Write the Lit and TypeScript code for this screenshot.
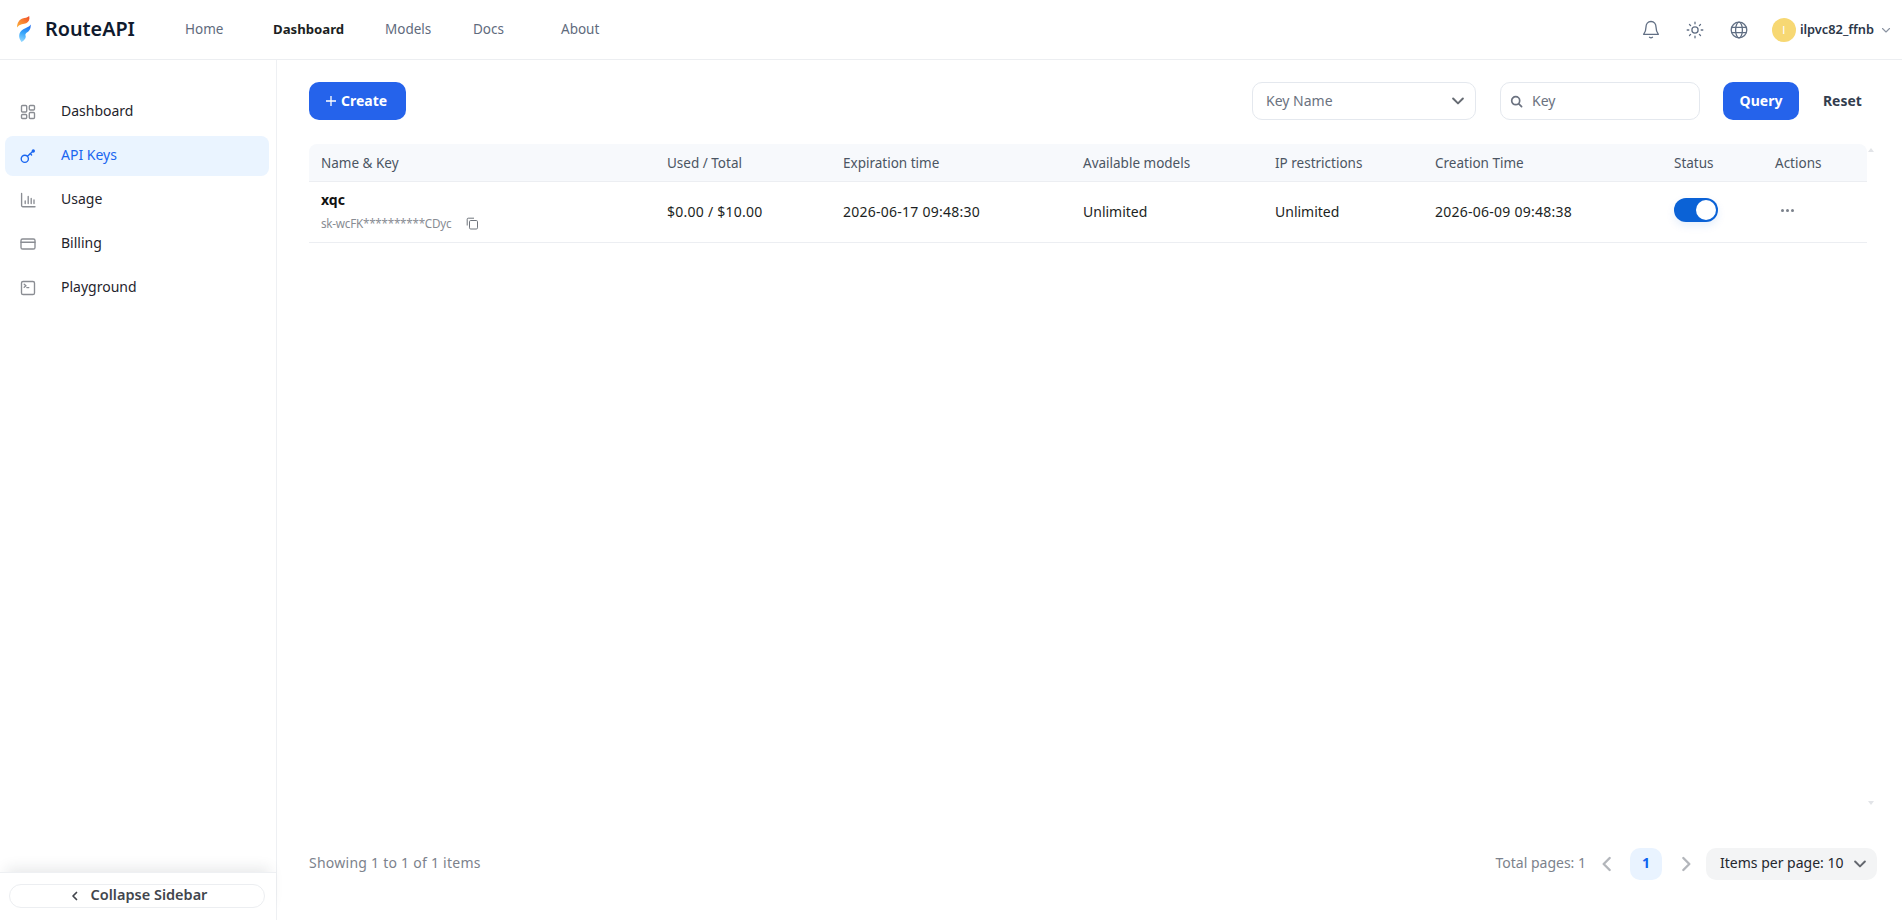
import { LitElement, html, css, svg } from "lit";
import { customElement } from "lit/decorators.js";

const cols = [346, 176, 240, 192, 160, 239, 101, 104];
const gridCols = cols.map((c) => c + "px").join(" ");

const icons: Record<string, unknown> = {
  dashboard: svg`<rect x="1.5" y="1.5" width="5.2" height="6.5" rx="1"/><rect x="9.3" y="1.5" width="5.2" height="4.5" rx="1"/><rect x="1.5" y="10.5" width="5.2" height="4" rx="1"/><rect x="9.3" y="8.5" width="5.2" height="6" rx="1"/>`,
  key: svg`<circle cx="4.8" cy="10.8" r="3.6"/><path d="M7.5 8.2 12.6 3.6"/><path d="M10.4 5.6l1.2 1.4"/><circle cx="13.3" cy="3" r="1" fill="currentColor"/>`,
  usage: svg`<path d="M1.6 1.5v12a1.2 1.2 0 0 0 1.2 1.2H15"/><path d="M5.2 11.5V9M8.2 11.5V4.5M11.2 11.5V6.5M14 11.5V8"/>`,
  billing: svg`<rect x="1" y="3" width="14" height="10" rx="1.6"/><path d="M1 6.2h14"/>`,
  play: svg`<rect x="1.5" y="1.5" width="13" height="13" rx="1.6"/><path d="M4.2 4.2 6 5.7 4.2 7.2M6.8 7.6h2"/>`,
};

@customElement("app-root")
export class AppRoot extends LitElement {
  static styles = css`
    :host {
      display: flex;
      flex-direction: column;
      width: 1902px;
      height: 920px;
      overflow: hidden;
      background: #fff;
      font-family: "Noto Sans", "Open Sans", sans-serif;
      font-size: 14px;
      color: #1c1f23;
    }
    svg { display: block; flex: none; }
    .top {
      height: 59px;
      flex: none;
      display: flex;
      align-items: center;
      border-bottom: 1px solid #eceef1;
      position: relative;
    }
    .logo { margin-left: 17px; width: 14px; height: 26px; margin-top: -2px; }
    .brand {
      margin-left: 14px;
      width: 95px;
      font-size: 19.8px;
      font-weight: 600;
      color: #0f1a2e;
      padding-bottom: 3px;
      white-space: nowrap;
    }
    .nav { display: flex; margin-left: 45px; padding-bottom: 1px; }
    .nav span { width: 88px; color: #5f6b7d; font-size: 13.5px; }
    .nav span.on { color: #1c1f23; font-weight: 700; font-size: 13.2px; }
    .nav span.w112 { width: 112px; }
    .right {
      margin-left: auto;
      display: flex;
      align-items: center;
      margin-right: 10px;
      color: #616f84;
    }
    .right .ic { width: 44px; display: flex; justify-content: center; }
    .avatar {
      width: 24px; height: 24px; border-radius: 50%;
      background: #f7d873; color: #fff;
      display: flex; align-items: center; justify-content: center;
      font-family: "Liberation Sans", sans-serif;
      font-size: 11px;
      margin-left: 11px;
    }
    .uname { margin-left: 4px; font-size: 12.8px; font-weight: 600; color: #2b3648; padding-bottom: 2px; }
    .uchev { margin-left: 6px; color: #8a93a1; }

    .body { flex: 1; display: flex; min-height: 0; }
    .side {
      width: 276px;
      flex: none;
      border-right: 1px solid #eef0f3;
      display: flex;
      flex-direction: column;
    }
    .menu { flex: 1; padding: 32px 7px 0 5px; display: flex; flex-direction: column; gap: 4px; }
    .item {
      height: 40px;
      display: flex;
      align-items: center;
      border-radius: 8px;
      padding-left: 15px;
      color: #1f242c;
    }
    .item svg { color: #8a8d93; }
    .item span { margin-left: 25px; font-size: 14px; padding-bottom: 3px; }
    .item.on { background: #eaf4ff; color: #1a66f0; }
    .item.on svg { color: #1a66f0; }
    .collapse {
      flex: none;
      height: 48px;
      box-sizing: border-box;
      border-top: 1px solid #eef0f3;
      padding: 11px 11px 0 9px;
      box-shadow: 0 -10px 14px -6px rgba(30, 35, 45, 0.1);
      position: relative;
      background: #fff;
    }
    .pill {
      height: 24px;
      border: 1px solid #eceef1;
      border-radius: 12px;
      display: flex;
      align-items: center;
      justify-content: center;
      gap: 10px;
      box-sizing: border-box;
      font-weight: 600;
      font-size: 14.5px;
      color: #42464d;
      padding-left: 2px;
    }
    .pill span { padding-bottom: 4px; }

    .main { flex: 1; min-width: 0; padding: 22px 0 0 32px; display: flex; flex-direction: column; position: relative; }
    .tools { display: flex; align-items: center; height: 38px; flex: none; }
    .btn {
      height: 38px;
      box-sizing: border-box;
      border-radius: 10px;
      background: #2563eb;
      color: #fff;
      font-weight: 700;
      display: flex;
      align-items: center;
      justify-content: center;
      padding-bottom: 2px;
    }
    .create { width: 97px; gap: 5px; padding-right: 2px; }
    .create svg { margin-top: 2px; }
    .sel, .inp {
      height: 38px;
      box-sizing: border-box;
      border: 1px solid #e4e8ee;
      border-radius: 10px;
      display: flex;
      align-items: center;
      color: #6b7280;
    }
    .sel span, .inp span { padding-bottom: 2px; }
    .sel { margin-left: auto; width: 224px; padding: 0 10px 0 13px; justify-content: space-between; }
    .sel svg { color: #666b73; }
    .inp { margin-left: 24px; width: 200px; padding-left: 9px; gap: 9px; }
    .query { margin-left: 23px; width: 76px; }
    .reset { margin-left: 24px; width: 40px; margin-right: 39px; font-weight: 700; font-size: 13.9px; color: #323d4e; padding-bottom: 2px; white-space: nowrap; }

    .table { margin-top: 24px; width: 1558px; flex: 1; min-height: 0; }
    .head, .row { display: grid; }
    .head {
      height: 37px;
      background: #f7f9fc;
      border-bottom: 1px solid #eceef2;
      border-radius: 8px 8px 0 0;
      align-items: center;
      color: #4b5563;
      font-size: 13.5px;
    }
    .head div, .row > div { padding-left: 12px; }
    .row { height: 60px; border-bottom: 1px solid #eceef2; align-items: center; }
    .cell { padding-bottom: 2px; }
    .num { letter-spacing: 0.25px; }
    .name { font-weight: 700; font-size: 14px; color: #111; line-height: 20px; margin-top: -1px; }
    .keyline { display: flex; align-items: center; font-size: 11.7px; letter-spacing: -0.25px; color: #888c93; line-height: 20px; margin-top: 3px; gap: 15px; }
    .toggle {
      width: 44px; height: 24px; border-radius: 12px; background: #0b62d6;
      box-shadow: 0 4px 8px rgba(11, 98, 214, 0.1);
      display: flex; align-items: center; justify-content: flex-end; padding: 0 2px; box-sizing: border-box;
      margin-bottom: 5px;
    }
    .knob { width: 20px; height: 20px; border-radius: 50%; background: #fff; }
    .more { display: flex; gap: 2px; padding-left: 6px; margin-bottom: 4px; }
    .more i { width: 3px; height: 3px; border-radius: 50%; background: #7b818b; display: block; }
    .tri { position: absolute; left: 1591px; width: 0; height: 0; border-left: 3.5px solid transparent; border-right: 3.5px solid transparent; }
    .tri.up { top: 88px; border-bottom: 4px solid #e2e4e8; }
    .tri.down { top: 741px; border-top: 4px solid #e2e4e8; }

    .foot {
      flex: none;
      height: 32px;
      margin-bottom: 40px;
      width: 1568px;
      display: flex;
      align-items: center;
      color: #7c828c;
    }
    .foot > span, .cur, .per span { padding-bottom: 3px; }
    .showing { letter-spacing: 0.25px; }
    .total { margin-left: auto; }
    .pg { width: 32px; height: 32px; border-radius: 10px; display: flex; align-items: center; justify-content: center; box-sizing: border-box; }
    .pgarrow { color: #b3b6bb; margin-left: 9px; margin-right: 11px; width: 24px; display: flex; justify-content: center; }
    .pgarrow.next { margin-left: 12px; margin-right: 8px; }
    .cur { background: #e9f3ff; color: #0f62f0; font-weight: 700; }
    .per {
      height: 32px; width: 171px; box-sizing: border-box; background: #f3f4f5; border-radius: 10px;
      display: flex; align-items: center; justify-content: space-between; padding: 0 10px 0 14px; color: #23272e;
    }
    .per svg { color: #63676e; }
  `;

  private ic(name: string) {
    return html`<svg width="16" height="16" viewBox="0 0 16 16" fill="none" stroke="currentColor" stroke-width="1.35" stroke-linecap="round" stroke-linejoin="round">${icons[name]}</svg>`;
  }

  private chev(d: string, size = 12, w = 1.6) {
    return html`<svg width=${size} height=${size} viewBox="0 0 12 12" fill="none" stroke="currentColor" stroke-width=${w} stroke-linecap="round" stroke-linejoin="round"><path d=${d}/></svg>`;
  }

  render() {
    const menu: [string, string, boolean][] = [
      ["dashboard", "Dashboard", false],
      ["key", "API Keys", true],
      ["usage", "Usage", false],
      ["billing", "Billing", false],
      ["play", "Playground", false],
    ];
    const heads = ["Name & Key", "Used / Total", "Expiration time", "Available models", "IP restrictions", "Creation Time", "Status", "Actions"];
    return html`
      <header class="top">
        <svg class="logo" viewBox="0 0 14 26">
          <defs>
            <linearGradient id="lo" x1="0" y1="1" x2="1" y2="0"><stop offset="0" stop-color="#fbb03b"/><stop offset=".6" stop-color="#f7772f"/><stop offset="1" stop-color="#ef4a2a"/></linearGradient>
            <linearGradient id="lb" x1="0.4" y1="1" x2="0.6" y2="0"><stop offset="0" stop-color="#8fd6ff"/><stop offset=".5" stop-color="#36a5fa"/><stop offset="1" stop-color="#1f6cf0"/></linearGradient>
          </defs>
          <path fill="url(#lo)" d="M0 11.4C.2 7 2.2 3.6 5.5 2.6 8 1.8 10.3 1.8 12.2 0 13 3.4 11.8 6 9.2 7.2 6.8 8.2 3 7.6 0 11.4Z"/>
          <path fill="url(#lb)" d="M13.6 8.6C14.2 12.6 12.4 15 10.4 16.2 8.6 17.3 8 18.4 8.6 19.8 9.3 21.8 7.4 24.4 4.4 26 3.6 24 1.8 22.6 2.2 19.4 2.6 15.6 5.6 13.2 8.4 12.2 10.4 11.5 12.4 10.8 13.6 8.6Z"/>
        </svg>
        <div class="brand">RouteAPI</div>
        <nav class="nav">
          <span>Home</span><span class="on w112">Dashboard</span><span>Models</span><span>Docs</span><span>About</span>
        </nav>
        <div class="right">
          <div class="ic"><svg width="18" height="20" viewBox="0 0 18 20" fill="none" stroke="currentColor" stroke-width="1.3" stroke-linecap="round" stroke-linejoin="round"><path d="M9 1.5C5.8 1.5 4 4 4 7c0 4-1.2 5.8-2.4 7.3h14.8C15.2 12.8 14 11 14 7c0-3-1.8-5.5-5-5.5Z"/><path d="M7.5 17.3c.9.6 2.1.6 3 0"/></svg></div>
          <div class="ic"><svg width="18" height="18" viewBox="0 0 18 18" fill="none" stroke="currentColor" stroke-width="1.3" stroke-linecap="round"><circle cx="9" cy="9" r="3.1"/><path d="M9 1.2v1.6M9 15.2v1.6M1.2 9h1.6M15.2 9h1.6M3.5 3.5l1.1 1.1M13.4 13.4l1.1 1.1M3.5 14.5l1.1-1.1M13.4 4.6l1.1-1.1"/></svg></div>
          <div class="ic"><svg width="18" height="18" viewBox="0 0 18 18" fill="none" stroke="currentColor" stroke-width="1.3"><circle cx="9" cy="9" r="7.8"/><ellipse cx="9" cy="9" rx="3.4" ry="7.8"/><path d="M1.6 6.4h14.8M1.6 11.6h14.8"/></svg></div>
          <div class="avatar">I</div>
          <div class="uname">ilpvc82_ffnb</div>
          <div class="uchev">${this.chev("M2.5 4.5 6 8l3.5-3.5", 12, 1.1)}</div>
        </div>
      </header>
      <div class="body">
        <aside class="side">
          <div class="menu">
            ${menu.map(([i, t, on]) => html`<div class="item ${on ? "on" : ""}">${this.ic(i)}<span>${t}</span></div>`)}
          </div>
          <div class="collapse"><div class="pill">${this.chev("M7.5 2.5 4 6l3.5 3.5", 12, 1.7)}<span>Collapse Sidebar</span></div></div>
        </aside>
        <main class="main">
          <div class="tools">
            <div class="btn create"><svg width="10" height="10" viewBox="0 0 10 10" stroke="currentColor" stroke-width="1.3"><path d="M5 0v10M0 5h10"/></svg><span>Create</span></div>
            <div class="sel"><span>Key Name</span>${this.chev("M1.8 3.8 6 8l4.2-4.2", 14, 1.7)}</div>
            <div class="inp"><svg width="13" height="13" viewBox="0 0 13 13" fill="none" stroke="currentColor" stroke-width="1.7" stroke-linecap="round"><circle cx="5.7" cy="5.7" r="4"/><path d="m8.8 8.8 2.8 2.8"/></svg><span>Key</span></div>
            <div class="btn query">Query</div>
            <div class="reset">Reset</div>
          </div>
          <div class="table">
            <div class="head" style="grid-template-columns:${gridCols}">${heads.map((h) => html`<div>${h}</div>`)}</div>
            <div class="row" style="grid-template-columns:${gridCols}">
              <div>
                <div class="name">xqc</div>
                <div class="keyline"><span>sk-wcFK**********CDyc</span><svg width="13" height="13" viewBox="0 0 13 13" fill="none" stroke="#6f747c" stroke-width="1"><rect x="3.5" y="3.5" width="8" height="8.5" rx="1.2"/><path d="M1.2 8.5V2.2a1 1 0 0 1 1-1H8"/></svg></div>
              </div>
              <div class="cell num">$0.00 / $10.00</div>
              <div class="cell num">2026-06-17 09:48:30</div>
              <div class="cell">Unlimited</div>
              <div class="cell">Unlimited</div>
              <div class="cell num">2026-06-09 09:48:38</div>
              <div><div class="toggle"><div class="knob"></div></div></div>
              <div><div class="more"><i></i><i></i><i></i></div></div>
            </div>
          </div>
          <div class="tri up"></div>
          <div class="tri down"></div>
          <div class="foot">
            <span class="showing">Showing 1 to 1 of 1 items</span>
            <span class="total">Total pages: 1</span>
            <div class="pgarrow">${this.chev("M8 1.5 3.5 6 8 10.5", 16, 1.8)}</div>
            <div class="pg cur">1</div>
            <div class="pgarrow next">${this.chev("M4 1.5 8.5 6 4 10.5", 16, 1.8)}</div>
            <div class="per"><span>Items per page: 10</span>${this.chev("M1.8 3.8 6 8l4.2-4.2", 14, 1.7)}</div>
          </div>
        </main>
      </div>
    `;
  }
}
